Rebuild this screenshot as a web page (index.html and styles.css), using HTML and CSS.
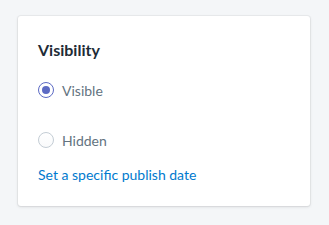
FILE: index.html
```html
<!DOCTYPE html>
<html lang="en">

<head>
    <meta charset="UTF-8">
    <meta name="viewport" content="width=device-width, initial-scale=1.0">
    <title>Visibility</title>
    <link rel="stylesheet" href="styles.css">
</head>

<body>
    <div class="card">
        <h2 class="card-title">Visibility</h2>

        <!-- radio options -->
        <div class="choices">
            <label class="choice">
                <span class="radio checked"></span>
                <span class="choice-label">Visible</span>
            </label>
            <label class="choice">
                <span class="radio"></span>
                <span class="choice-label">Hidden</span>
            </label>
        </div>

        <a href="#" class="link">Set a specific publish date</a>
    </div>
</body>

</html>
```
FILE: styles.css
```css
body {
    margin: 0;
    padding: 16px 19px 19px 18px;
    background: #f4f6f8;
    font-family: Lato, "Open Sans", sans-serif;
}

/* card */
.card {
    background: #fff;
    border-radius: 3px;
    padding: 22px 20px 21px;
    box-shadow: 0 0 0 1px rgba(63, 63, 68, 0.05), 0 1px 3px rgba(63, 63, 68, 0.15);
}

.card-title {
    margin: 0;
    font-size: 16px;
    font-weight: 700;
    line-height: 24px;
    color: #212b36;
}

/* radio list */
.choices {
    display: flex;
    flex-direction: column;
    gap: 30px;
    margin-top: 18px;
}

.choice {
    display: flex;
    align-items: center;
    gap: 8px;
    height: 20px;
}

.radio {
    width: 16px;
    height: 16px;
    box-sizing: border-box;
    border-radius: 50%;
    border: 1px solid #c4cdd5;
    background: linear-gradient(#fff, #f9fafb);
    display: flex;
    justify-content: center;
    align-items: center;
}

.radio.checked {
    border: 1.5px solid #5c6ac4;
    background: #fff;
}

.radio.checked::after {
    content: '';
    width: 8px;
    height: 8px;
    border-radius: 50%;
    background: #5c6ac4;
}

.choice-label {
    font-size: 14px;
    color: #637381;
}

.link {
    display: block;
    margin-top: 15px;
    font-size: 14px;
    line-height: 20px;
    color: #007ace;
    text-decoration: none;
}
```
